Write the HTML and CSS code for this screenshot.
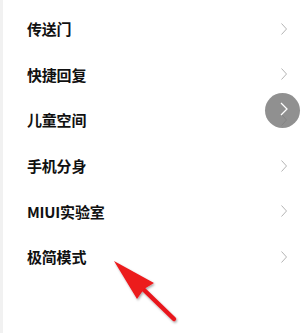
FILE: index.html
```html
<!DOCTYPE html>
<html>
<head>
<meta charset="utf-8">
<link rel="stylesheet" href="styles.css">
</head>
<body>
<div class="page">
  <ul class="list">
    <li class="row"><span class="label">传送门</span><svg class="chev" viewBox="0 0 6 12"><path d="M0.5 0.5 L5.5 6 L0.5 11.5"/></svg></li>
    <li class="row"><span class="label">快捷回复</span><svg class="chev" viewBox="0 0 6 12"><path d="M0.5 0.5 L5.5 6 L0.5 11.5"/></svg></li>
    <li class="row"><span class="label">儿童空间</span><svg class="chev" viewBox="0 0 6 12"><path d="M0.5 0.5 L5.5 6 L0.5 11.5"/></svg></li>
    <li class="row"><span class="label">手机分身</span><svg class="chev" viewBox="0 0 6 12"><path d="M0.5 0.5 L5.5 6 L0.5 11.5"/></svg></li>
    <li class="row"><span class="label">MIUI实验室</span><svg class="chev" viewBox="0 0 6 12"><path d="M0.5 0.5 L5.5 6 L0.5 11.5"/></svg></li>
    <li class="row"><span class="label">极简模式</span><svg class="chev" viewBox="0 0 6 12"><path d="M0.5 0.5 L5.5 6 L0.5 11.5"/></svg></li>
  </ul>
  <div class="float-btn"><svg viewBox="0 0 8 14"><path d="M1 1 L7 7 L1 13"/></svg></div>
  <svg class="arrow" viewBox="0 0 80 80">
    <defs>
      <filter id="sh" x="-20%" y="-20%" width="140%" height="140%">
        <feDropShadow dx="1" dy="1.5" stdDeviation="1.2" flood-color="#000" flood-opacity="0.35"/>
      </filter>
    </defs>
    <g filter="url(#sh)">
      <line x1="29" y1="28" x2="61" y2="59" stroke="#e8151b" stroke-width="4.5" stroke-linecap="round"/>
      <polygon points="1,1 41,23 31,29 24,39" fill="#ec1a1f"/>
    </g>
  </svg>
</div>
</body>
</html>
```

FILE: styles.css
```css
html, body {
  margin: 0;
  padding: 0;
  background: #ffffff;
}
.page {
  position: relative;
  width: 302px;
  height: 333px;
  overflow: hidden;
  background: #ffffff;
  border-left: 3px solid #f1f1f1;
  box-sizing: border-box;
  font-family: "Noto Sans CJK SC", "Noto Sans", sans-serif;
}
.list {
  list-style: none;
  margin: 0;
  padding: 6px 0 0 0;
}
.row {
  height: 45.6px;
  display: flex;
  align-items: center;
  justify-content: space-between;
  padding: 0 15px 0 24px;
}
.label {
  font-size: 15px;
  font-weight: 700;
  color: #111111;
  letter-spacing: -0.2px;
}
.chev {
  width: 6px;
  height: 12px;
  fill: none;
  stroke: #b4b4b4;
  stroke-width: 1;
}
.float-btn {
  position: absolute;
  left: 262px;
  top: 93px;
  width: 35px;
  height: 35px;
  border-radius: 50%;
  background: rgba(120, 120, 120, 0.82);
  display: flex;
  align-items: center;
  justify-content: center;
}
.float-btn svg {
  width: 8px;
  height: 14px;
  fill: none;
  stroke: #ffffff;
  stroke-width: 1.3;
  margin-left: 2px;
  margin-top: -4px;
}
.arrow {
  position: absolute;
  left: 110px;
  top: 260px;
  width: 80px;
  height: 80px;
  overflow: visible;
}
```
